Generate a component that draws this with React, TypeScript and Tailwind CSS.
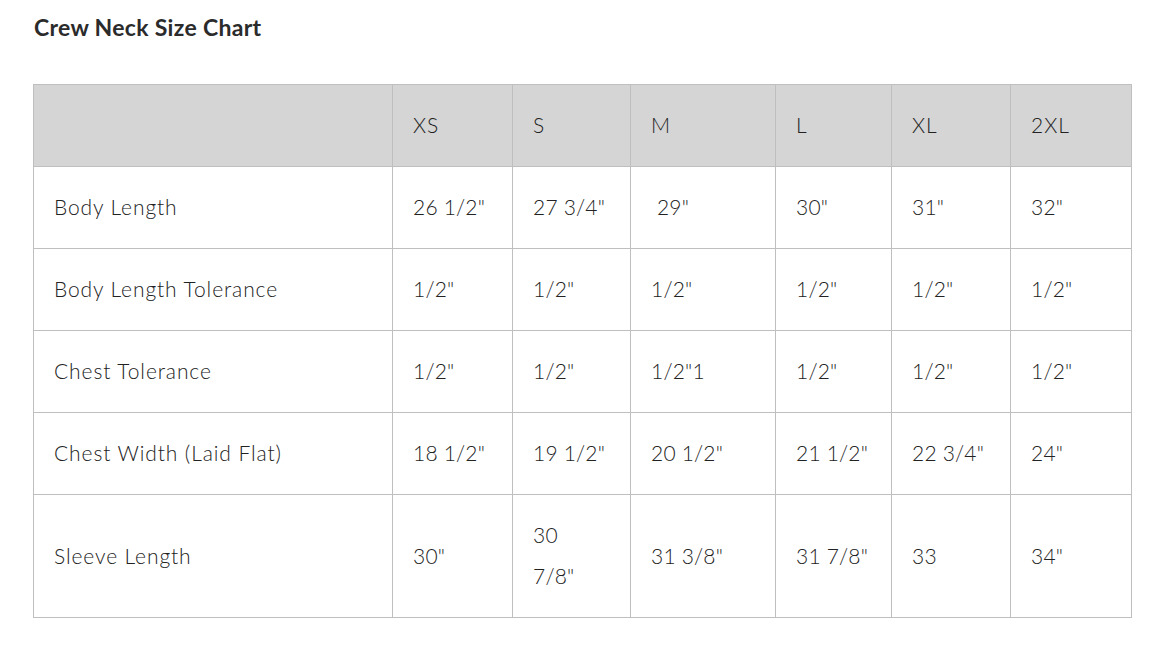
import React from "react";

const headers = ["", "XS", "S", "M", "L", "XL", "2XL"];
const widths = [359, 120, 118, 145, 116, 119, 121];
const rows: React.ReactNode[][] = [
  ["Body Length", "26 1/2\"", "27 3/4\"", "\u00a029\"", "30\"", "31\"", "32\""],
  ["Body Length Tolerance", "1/2\"", "1/2\"", "1/2\"", "1/2\"", "1/2\"", "1/2\""],
  ["Chest Tolerance", "1/2\"", "1/2\"", "1/2\"1", "1/2\"", "1/2\"", "1/2\""],
  ["Chest Width (Laid Flat)", "18 1/2\"", "19 1/2\"", "20 1/2\"", "21 1/2\"", "22 3/4\"", "24\""],
  [
    "Sleeve Length",
    "30\"",
    <>
      30
      <br />
      7/8"
    </>,
    "31 3/8\"",
    "31 7/8\"",
    "33",
    "34\"",
  ],
];

export default function App() {
  return (
    <div className="min-h-[670px] w-[1166px] bg-white text-[#222222]" style={{ fontFamily: "Lato, 'Open Sans', sans-serif" }}>
      <div className="pl-[34px] pt-[11px]">
        <h2 className="text-[23px] font-bold leading-[32px] text-[#2b2b2b] tracking-[0.3px]">Crew Neck Size Chart</h2>
      </div>
      <div className="pl-[33px] pt-[41px]">
        <table className="border-collapse table-fixed w-[1098px]">
          <colgroup>
            {widths.map((w, i) => (
              <col key={i} style={{ width: w }} />
            ))}
          </colgroup>
          <thead>
            <tr className="bg-[#d5d5d5]">
              {headers.map((h, i) => (
                <th key={i} className="border border-[#bfbfbf] px-[20px] pt-[19px] pb-[21px] text-left font-light text-[21px] leading-[41px] tracking-[1px]">
                  {h}
                </th>
              ))}
            </tr>
          </thead>
          <tbody>
            {rows.map((r, ri) => (
              <tr key={ri}>
                {r.map((c, ci) => (
                  <td
                    key={ci}
                    className={
                      ci === 0
                        ? "border border-[#bfbfbf] px-[20px] pt-[19px] pb-[21px] text-left font-light text-[21px] leading-[41px] tracking-[0.9px]"
                        : "border border-[#bfbfbf] px-[20px] pt-[19px] pb-[21px] text-left font-light text-[21px] leading-[41px] tracking-[0.2px]"
                    }
                  >
                    {c}
                  </td>
                ))}
              </tr>
            ))}
          </tbody>
        </table>
      </div>
    </div>
  );
}
